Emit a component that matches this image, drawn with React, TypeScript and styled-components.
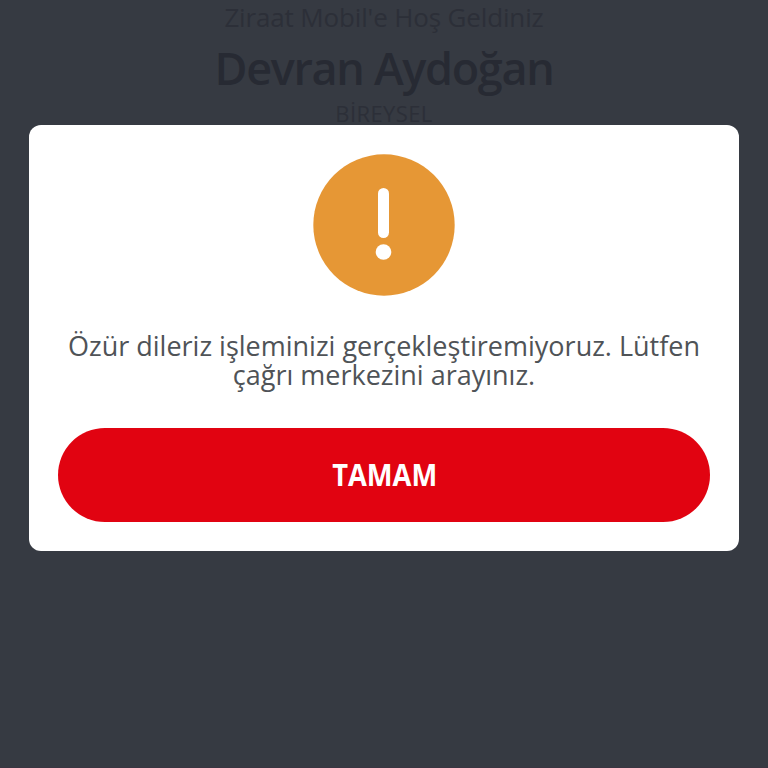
import styled, { createGlobalStyle } from 'styled-components';

const palette = {
  backdrop: '#363a42',
  dimText: '#2c2f38',
  dimTitle: '#272a33',
  edge: '#3a3541',
  white: '#ffffff',
  text: '#4f5357',
  orange: '#e69735',
  red: '#e10311',
};

interface LineProps {
  size: number;
  lineHeight: number;
  spacing?: number;
  weight?: number;
}

const WarningIcon = () => (
  <svg width="142" height="142" viewBox="0 0 142 142" aria-hidden="true">
    <circle cx="71" cy="71" r="70.7" fill={palette.orange} />
    <rect x="65" y="34" width="11" height="50" rx="5.5" fill={palette.white} />
    <circle cx="70.5" cy="98" r="7.8" fill={palette.white} />
  </svg>
);

const App = () => {
  return (
    <>
      <GlobalStyle />
      <Screen>
        <Header>
          <HeaderLine size={26} lineHeight={34} spacing={-0.15}>
            Ziraat Mobil'e Hoş Geldiniz
          </HeaderLine>
          <UserName size={45} lineHeight={68} spacing={-1.35} weight={600}>
            Devran Aydoğan
          </UserName>
          <HeaderLine size={22} lineHeight={22} spacing={0.4}>
            BİREYSEL
          </HeaderLine>
        </Header>
        <Overlay>
          <Dialog role="alertdialog">
            <WarningIcon />
            <Message>
              Özür dileriz işleminizi gerçekleştiremiyoruz. Lütfen çağrı
              merkezini arayınız.
            </Message>
            <ConfirmButton type="button">
              <span>TAMAM</span>
            </ConfirmButton>
          </Dialog>
        </Overlay>
      </Screen>
    </>
  );
};

const GlobalStyle = createGlobalStyle`
  * {
    box-sizing: border-box;
  }
  body {
    margin: 0;
    font-family: 'Open Sans', 'Noto Sans', sans-serif;
  }
`;

const Screen = styled.div`
  position: relative;
  height: 768px;
  overflow: hidden;
  background: ${palette.backdrop};
  border-bottom: 1px solid ${palette.edge};
`;

const Header = styled.header`
  display: flex;
  flex-direction: column;
  align-items: center;
`;

const HeaderLine = styled.p<LineProps>`
  margin: 0;
  color: ${palette.dimText};
  font-size: ${({ size }) => size}px;
  font-weight: ${({ weight }) => weight ?? 400};
  line-height: ${({ lineHeight }) => lineHeight}px;
  letter-spacing: ${({ spacing }) => spacing ?? 0}px;
  white-space: nowrap;
`;

const UserName = styled(HeaderLine)`
  color: ${palette.dimTitle};
`;

const Overlay = styled.div`
  position: absolute;
  inset: 0;
  padding: 125.4px 29px 0;
`;

const Dialog = styled.div`
  display: flex;
  flex-direction: column;
  align-items: center;
  height: 426px;
  padding: 28.6px 29px 29.4px;
  border-radius: 12px;
  background: ${palette.white};
`;

const Message = styled.p`
  width: 100%;
  margin: 35px 0 0;
  color: ${palette.text};
  font-size: 27px;
  line-height: 29px;
  text-align: center;
`;

const ConfirmButton = styled.button`
  width: 100%;
  height: 94px;
  margin-top: auto;
  padding: 0 0 2px 1px;
  border: 0;
  border-radius: 47px;
  background: ${palette.red};
  color: ${palette.white};
  font-family: inherit;
  font-size: 30px;
  font-weight: 700;
  span {
    display: inline-block;
    transform: scaleX(0.91);
  }
`;

export default App;
